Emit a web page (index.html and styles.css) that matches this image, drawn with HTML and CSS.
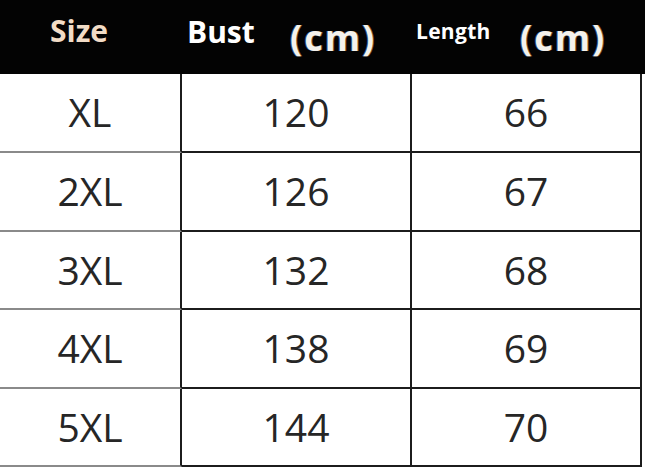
FILE: index.html
```html
<!DOCTYPE html>
<html lang="en">
<head>
<meta charset="utf-8">
<title>Size chart</title>
<link rel="stylesheet" href="styles.css">
</head>
<body>
  <div class="header">
    <span class="h h-size">Size</span>
    <span class="h h-bust">Bust</span>
    <span class="h h-cm">(cm)</span>
    <span class="h h-length">Length</span>
    <span class="h h-cm">(cm)</span>
  </div>
  <div class="table">
    <div class="cell c1">XL</div><div class="cell">120</div><div class="cell">66</div>
    <div class="cell c1">2XL</div><div class="cell">126</div><div class="cell">67</div>
    <div class="cell c1">3XL</div><div class="cell">132</div><div class="cell">68</div>
    <div class="cell c1">4XL</div><div class="cell">138</div><div class="cell">69</div>
    <div class="cell c1">5XL</div><div class="cell">144</div><div class="cell">70</div>
  </div>
</body>
</html>
```
FILE: styles.css
```css
html, body {
  margin: 0;
  padding: 0;
  background: #ffffff;
}
body {
  width: 645px;
  height: 473px;
  overflow: hidden;
  font-family: "Open Sans", "Noto Sans", sans-serif;
}
.header {
  height: 74px;
  background: #030303;
  box-sizing: border-box;
  padding-left: 50px;
  display: grid;
  grid-template-columns: 137px 103px 126px 104px 1fr;
  align-items: start;
}
.h {
  font-weight: 700;
  line-height: 1;
  white-space: nowrap;
}
.h-size {
  font-size: 30px;
  color: #f2dcc6;
  padding-top: 16px;
}
.h-bust {
  font-size: 30px;
  color: #ffffff;
  padding-top: 17px;
}
.h-cm {
  font-size: 36px;
  letter-spacing: 2px;
  color: #f4f1ec;
  padding-top: 20px;
  text-shadow: -1px 0 0 rgba(90, 140, 220, 0.55), 1px 0 0 rgba(230, 160, 80, 0.55);
}
.h-length {
  font-size: 21px;
  letter-spacing: 0.3px;
  color: #ffffff;
  padding-top: 21px;
}
.table {
  width: 642px;
  display: grid;
  grid-template-columns: 182px 230px 230px;
  grid-template-rows: 79px 79px 78px 79px 78px;
}
.cell {
  box-sizing: border-box;
  border-right: 2px solid #1c1c1c;
  border-bottom: 2px solid #1c1c1c;
  display: flex;
  align-items: center;
  justify-content: center;
  font-size: 39px;
  color: #262626;
  padding-bottom: 2px;
}
.c1 {
  border-bottom-color: #8a8a8a;
}
```
